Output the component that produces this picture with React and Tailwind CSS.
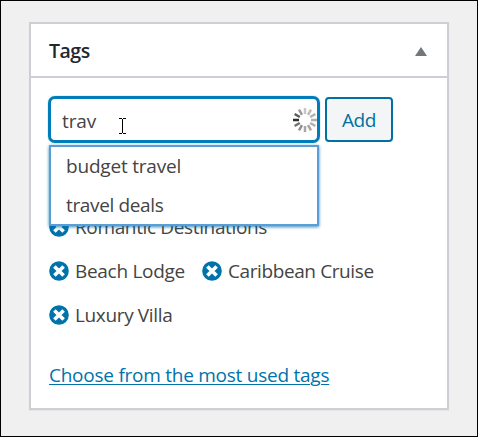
const SPOKES = [0.25, 0.3, 0.35, 0.35, 0.35, 0.4, 0.4, 0.5, 0.65, 0.95, 0.75, 0.45];

function Spinner() {
  return (
    <svg className="mt-px h-6 w-6 shrink-0" viewBox="-12 -12 24 24" stroke="#222" strokeWidth="2.5">
      {SPOKES.map((opacity, i) => (
        <line key={i} x1="0" y1="-6" x2="0" y2="-12" opacity={opacity} transform={`rotate(${i * 30})`} />
      ))}
    </svg>
  );
}

function IBeam() {
  return (
    <svg className="absolute left-[68px] top-[19px] h-4 w-[7px]" viewBox="0 0 7 16" fill="#000" shapeRendering="crispEdges">
      <path d="M0 0h3v1H0zM4 0h3v1H4zM3 1h1v14H3zM0 15h3v1H0zM4 15h3v1H4z" />
    </svg>
  );
}

function Tag({ children, className }) {
  return (
    <li className="flex h-11 items-center">
      <svg className="mr-[6px] h-5 w-5 shrink-0" viewBox="0 0 20 20">
        <circle cx="10" cy="10" r="9.8" fill="#0073aa" />
        <path d="M5.4 5.4l9.2 9.2M14.6 5.4l-9.2 9.2" stroke="#fff" strokeWidth="3.6" />
      </svg>
      <span className={className}>{children}</span>
    </li>
  );
}

export default function App() {
  return (
    <div className="h-[437px] w-[478px] overflow-hidden border border-black bg-[#f0f0f0] pl-[28px] pt-[21px] font-['Open_Sans',sans-serif] text-[19px] leading-[26px] tracking-[-0.36px] text-[#444]">
      <section className="h-[388px] w-[420px] border-2 border-[#ccd0d4] bg-white shadow-[0_1px_1px_rgba(0,0,0,0.04)]">
        <header className="flex h-[54px] items-center justify-between border-b-2 border-[#ccd0d4] pl-[18px] pr-[20px]">
          <h2 className="mt-px text-[19.5px] font-semibold tracking-[-0.5px] text-[#23282d]">Tags</h2>
          <svg className="mt-[2px] h-[9px] w-3" viewBox="0 0 12 9" fill="#72777c">
            <path d="M6 0l6 9H0z" />
          </svg>
        </header>
        <div className="pl-[18px] pt-[18px]">
          <div className="relative flex items-center">
            <div className="relative -ml-px flex h-[47px] w-[272px] items-center justify-between rounded-[7px] border-[3px] border-[#007cba] pl-[11px] shadow-[0_0_1px_#007cba]">
              <span className="mt-[2px] tracking-[-0.1px]">trav</span>
              <Spinner />
              <IBeam />
            </div>
            <button className="ml-[5px] h-[45px] w-[68px] rounded-[4px] border-2 border-[#0071a1] bg-[#f3f5f6] pt-px text-[#0071a1]">
              Add
            </button>
            <ul className="absolute left-0 top-[49px] z-10 h-[81px] w-[270px] border-2 border-[#5b9dd9] bg-white pl-[15px] shadow-[0_1px_3px_rgba(0,115,170,0.8)]">
              <li className="flex h-[38px] items-center tracking-[-0.2px]">budget travel</li>
              <li className="flex h-[39px] items-center">travel deals</li>
            </ul>
          </div>
          <ul className="mt-[62px] flex flex-wrap gap-x-[17px]">
            <Tag className="w-[300px]">Romantic Destinations</Tag>
            <Tag className="w-[110px] whitespace-nowrap tracking-[-0.3px]">Beach Lodge</Tag>
            <Tag className="whitespace-nowrap tracking-[-0.4px]">Caribbean Cruise</Tag>
            <Tag className="w-[300px]">Luxury Villa</Tag>
          </ul>
          <a href="#tags" className="mt-[25px] block w-fit whitespace-nowrap tracking-[-0.25px] text-[#0073aa] underline decoration-1 underline-offset-2">
            Choose from the most used tags
          </a>
        </div>
      </section>
    </div>
  );
}
